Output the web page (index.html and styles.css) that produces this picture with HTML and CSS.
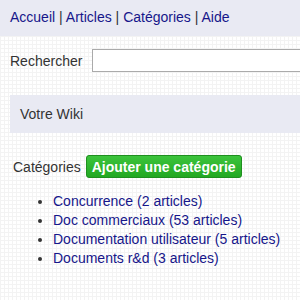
FILE: index.html
```html
<!DOCTYPE html>
<html lang="fr">
<head>
    <meta charset="UTF-8">
    <title>Votre Wiki</title>
    <link rel="stylesheet" href="styles.css">
</head>
<body>
    <div class="topnav">
        <a href="#">Accueil</a> | <a href="#">Articles</a> | <a href="#">Catégories</a> | <a href="#">Aide</a>
    </div>

    <form class="search">
        <label for="q">Rechercher</label>
        <input type="text" id="q" name="q">
    </form>

    <div class="wikibox">Votre Wiki</div>

    <div class="cats">
        <div class="cats-head">
            <span>Catégories</span>
            <button type="button" class="add-btn">Ajouter une catégorie</button>
        </div>
        <ul>
            <li><a href="#">Concurrence (2 articles)</a></li>
            <li><a href="#">Doc commerciaux (53 articles)</a></li>
            <li><a href="#">Documentation utilisateur (5 articles)</a></li>
            <li><a href="#">Documents r&amp;d (3 articles)</a></li>
        </ul>
    </div>
</body>
</html>
```

FILE: styles.css
```css
body {
    font-family: "Liberation Sans", Arial, sans-serif;
    font-size: 14px;
    color: #333;
    margin: 0;
    padding: 0;
    overflow: hidden;
    background-color: #fff;
    background-image:
        linear-gradient(to right, #f3f3f3 1px, transparent 1px),
        linear-gradient(to bottom, #f3f3f3 1px, transparent 1px);
    background-size: 4px 4px;
}
a {
    color: #16168a;
    text-decoration: none;
}
.topnav {
    background-color: #e9eaf3;
    height: 36px;
    line-height: 34px;
    padding-left: 10px;
    color: #333;
}
.search {
    display: flex;
    align-items: center;
    margin: 13px 0 0 10px;
    height: 23px;
    overflow: hidden;
}
.search label {
    margin-right: 10px;
}
.search input {
    flex: 1;
    height: 23px;
    margin-right: -20px;
    border: 1px solid #aaa;
    box-sizing: border-box;
    padding: 2px 4px;
}
.wikibox {
    background-color: #e9eaf3;
    margin: 23px 0 0 10px;
    height: 38px;
    line-height: 38px;
    padding-left: 10px;
}
.cats {
    margin: 22px 0 0 13px;
}
.cats-head {
    display: flex;
    align-items: center;
}
.add-btn {
    margin-left: 5px;
    background-color: #2db52d;
    background-image: linear-gradient(#3cc43c, #22a822);
    border: 1px solid #1f8f1f;
    border-radius: 3px;
    color: #fff;
    font-family: "Liberation Sans", Arial, sans-serif;
    font-weight: bold;
    font-size: 14px;
    height: 23px;
    padding: 0 5px;
}
.cats ul {
    margin: 14px 0 0 0;
    padding-left: 40px;
    line-height: 19px;
}
```
